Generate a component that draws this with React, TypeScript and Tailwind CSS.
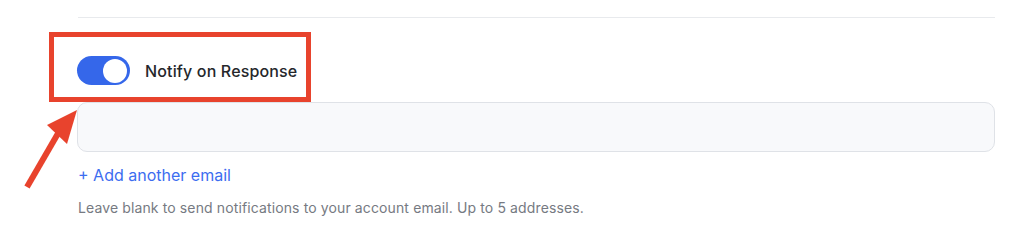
import React from "react";

function Toggle({ on }: { on: boolean }) {
  return (
    <div
      className={`flex h-[29px] w-[53px] items-center rounded-full px-[3px] ${
        on ? "justify-end bg-[#3567ea]" : "justify-start bg-gray-300"
      }`}
    >
      <div className="h-[24px] w-[24px] rounded-full bg-white" />
    </div>
  );
}

function Arrow() {
  return (
    <svg
      className="absolute left-0 top-0"
      width="100"
      height="200"
      viewBox="0 0 100 200"
    >
      <line
        x1="27"
        y1="187"
        x2="60"
        y2="130"
        stroke="#e8432d"
        strokeWidth="6"
        strokeLinecap="butt"
      />
      <polygon points="77,110 47,125 67,144" fill="#e8432d" />
    </svg>
  );
}

export default function App() {
  return (
    <div
      className="relative h-[225px] w-[1024px] overflow-hidden bg-white pt-[17px]"
      style={{ fontFamily: "Inter, 'Noto Sans', sans-serif" }}
    >
      <div className="ml-[78px] w-[917px] border-t border-[#e8eaed]" />

      <div className="ml-[49px] mt-[14px] h-[70px] w-[262px] border-[5px] border-[#e8432d] pl-[23px] pt-[19px]">
        <div className="flex items-center gap-[15px]">
          <Toggle on />
          <span className="text-[16px] font-medium tracking-[0.15px] text-[#25272b]">
            Notify on Response
          </span>
        </div>
      </div>

      <div className="ml-[77px] h-[50px] w-[918px] rounded-[10px] border border-[#dfe2e7] bg-[#f8f9fb]" />

      <div className="ml-[78px] mt-[11px] text-[16px] leading-6 text-[#3c6df0]">
        + Add another email
      </div>

      <div className="ml-[78px] mt-[11px] text-[14px] leading-5 tracking-[0.12px] text-[#767a82]">
        Leave blank to send notifications to your account email. Up to 5
        addresses.
      </div>

      <Arrow />
    </div>
  );
}
